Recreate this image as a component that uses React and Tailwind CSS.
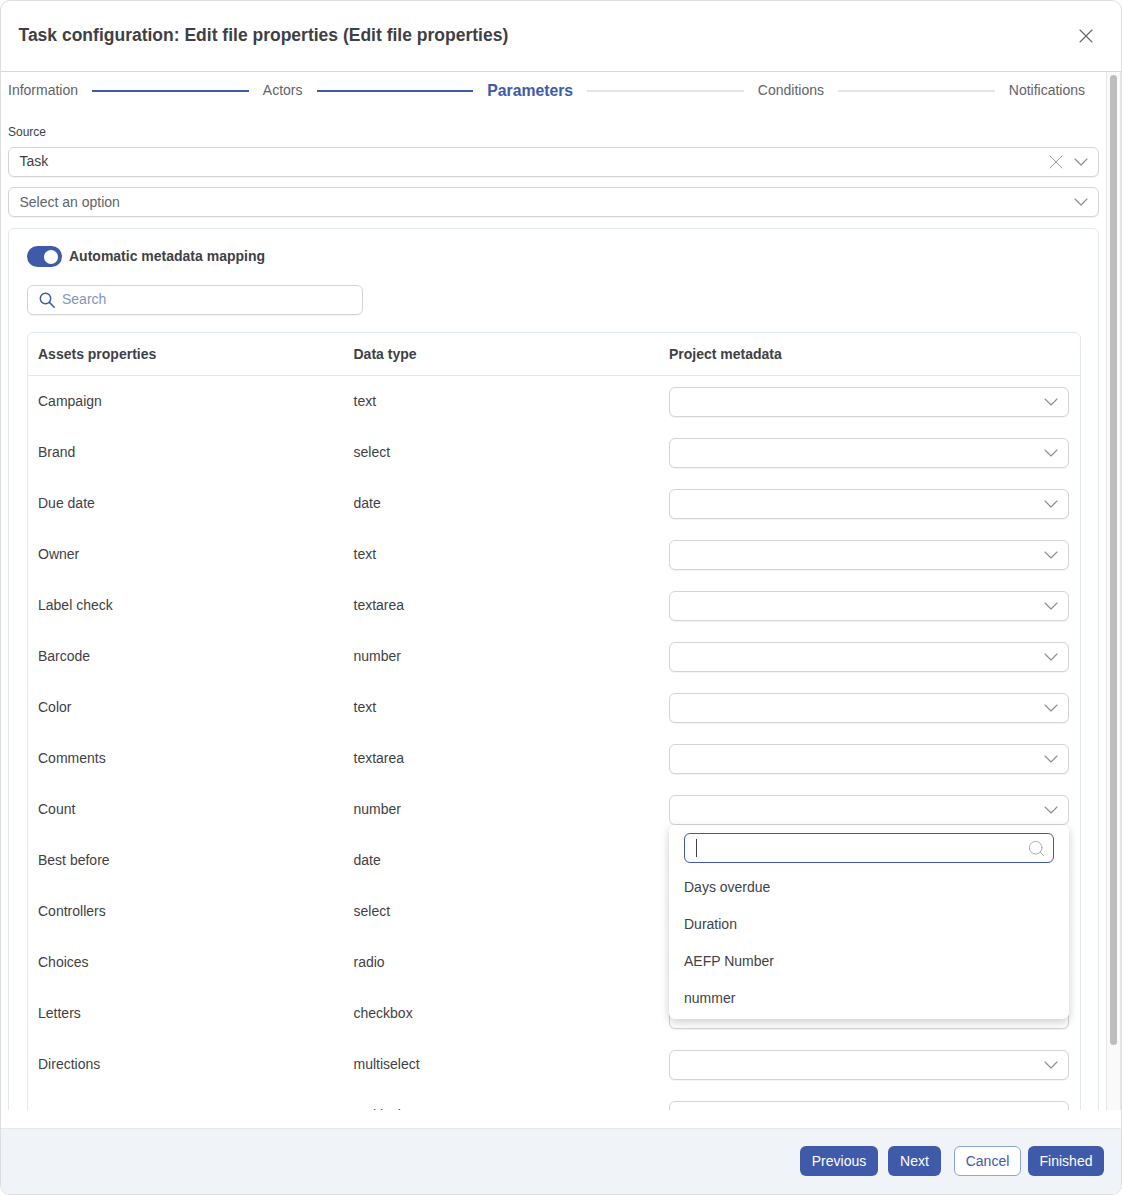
import { Fragment } from 'react';
import { ChevronDown, X, Search } from 'lucide-react';

const steps = [
  { label: 'Information', done: true },
  { label: 'Actors', done: true },
  { label: 'Parameters', active: true },
  { label: 'Conditions' },
  { label: 'Notifications', last: true },
];

const rows = [
  ['Campaign', 'text'],
  ['Brand', 'select'],
  ['Due date', 'date'],
  ['Owner', 'text'],
  ['Label check', 'textarea'],
  ['Barcode', 'number'],
  ['Color', 'text'],
  ['Comments', 'textarea'],
  ['Count', 'number'],
  ['Best before', 'date'],
  ['Controllers', 'select'],
  ['Choices', 'radio'],
  ['Letters', 'checkbox'],
  ['Directions', 'multiselect'],
  ['Currency', 'multiselect'],
];

const options = ['Days overdue', 'Duration', 'AEFP Number', 'nummer'];

const SelectBox = ({ children, clearable }) => (
  <div className="flex h-[30px] w-full items-center rounded-md border border-[#d4d4d8] bg-white pl-[10.5px] pr-[5px] text-sm shadow-[0_1px_1px_rgba(0,0,0,0.05)]">
    <div className="flex-1">{children}</div>
    {clearable && <X className="mr-px h-[24px] w-[24px] text-[#9a9aa2]" strokeWidth={1} />}
    <ChevronDown className="h-[24px] w-[24px] text-[#8b8b94]" strokeWidth={1.1} />
  </div>
);

const App = () => {
  return (
    <div className="flex h-[1195px] w-[1122px] flex-col overflow-hidden rounded-[10px] border border-[#dcdde0] bg-white font-['Liberation_Sans',Arial,sans-serif] text-[#3f3f46]">
      <div className="flex h-[71px] shrink-0 items-center justify-between border-b border-[#d8d8db] pl-[17.5px] pr-[23px]">
        <h1 className="pb-[2px] text-[17.5px] font-bold">Task configuration: Edit file properties (Edit file properties)</h1>
        <X className="h-[24px] w-[24px] text-[#63636b]" strokeWidth={1.1} />
      </div>

      <div className="flex h-[1038px] shrink-0">
        <div className="min-w-0 flex-1 overflow-hidden pl-[7px] pr-[7px]">
          <div className="flex h-[36px] items-center gap-[14px] pr-[14px]">
            {steps.map((step) => (
              <Fragment key={step.label}>
                <span className={step.active ? 'pt-px text-[15.75px] font-bold text-[#3f5aa9]' : 'text-sm text-[#63636b]'}>{step.label}</span>
                {!step.last && <div className={step.done ? 'mt-px h-[2px] flex-1 bg-[#3f5aa9]' : 'mt-px h-[2px] flex-1 bg-[#e4e4e7]'} />}
              </Fragment>
            ))}
          </div>

          <label className="mt-[17px] block text-xs leading-[14px]">Source</label>
          <div className="mt-[8px]">
            <SelectBox clearable><span className="block pb-[2px]">Task</span></SelectBox>
          </div>
          <div className="mt-[10px]">
            <SelectBox><span className="text-[#63636b]">Select an option</span></SelectBox>
          </div>

          <div className="mt-[11px] rounded-t-md border border-[#e2e8f0] pl-[18px] pr-[17px] pt-[17px]">
            <div className="flex items-center gap-[7px]">
              <div className="flex h-[21px] w-[35px] items-center justify-end rounded-full bg-[#3f5aa9] pr-[4px]">
                <div className="h-[14px] w-[14px] rounded-full bg-white" />
              </div>
              <span className="pb-[2px] text-sm leading-[18px] font-bold">Automatic metadata mapping</span>
            </div>

            <div className="mt-[18px] flex h-[30px] w-[336px] items-center gap-[7px] rounded-md border border-[#d4d4d8] pl-[11px] shadow-[0_1px_1px_rgba(0,0,0,0.05)]">
              {/* lucide's glass is too round here, the handle is longer */}
              <svg viewBox="0 0 16 16" fill="none" stroke="currentColor" strokeWidth="1.5" strokeLinecap="round" className="h-[16px] w-[16px] text-[#3f5aa9]">
                <circle cx="6.5" cy="6.5" r="5.2" />
                <path d="M10.4 10.4 15.2 15.2" />
              </svg>
              <span className="pb-[2px] text-sm text-[#8494bb]">Search</span>
            </div>

            <div className="relative mt-[17px] rounded-t-md border border-[#e2e8f0]">
              <div className="grid h-[43px] grid-cols-[315.5px_315.5px_1fr] items-center border-b border-[#e2e8f0] px-[10px] text-sm font-bold">
                <span>Assets properties</span>
                <span>Data type</span>
                <span>Project metadata</span>
              </div>
              <div className="pt-[11px]">
                {rows.map(([name, type]) => (
                  <div key={name} className="grid h-[51px] grid-cols-[315.5px_315.5px_1fr] px-[10px] pr-[11px] text-sm">
                    <span className="pt-[4px]">{name}</span>
                    <span className="pt-[4px]">{type}</span>
                    <SelectBox />
                  </div>
                ))}
              </div>

              <div className="absolute left-[641px] top-[492px] w-[400px] rounded-md bg-white px-[15px] pb-[3px] pt-[8px] shadow-[0_3px_10px_rgba(0,0,0,0.2)]">
                <div className="flex h-[30px] items-center justify-between rounded-md border border-[#3f5aa9] pl-[11px] pr-[7px]">
                  <div className="h-[18px] w-px bg-[#3f3f46]" />
                  <Search className="h-[19px] w-[19px] text-[#9a9aa2]" strokeWidth={1} />
                </div>
                <div className="mt-[5px]">
                  {options.map((option) => (
                    <div key={option} className="flex h-[37px] items-center text-sm">{option}</div>
                  ))}
                </div>
              </div>
            </div>
          </div>
        </div>

        <div className="w-[15px] shrink-0 border-x border-[#e8e8ea] bg-[#fafafa] px-[3px] pt-[3px]">
          <div className="h-[970px] rounded-full bg-[#bdbdbd]" />
        </div>
      </div>

      <div className="h-[18px] shrink-0" />

      <div className="flex flex-1 items-center justify-end border-t border-[#e2e8f0] bg-[#f0f4f9] pb-[2px] pr-[17px] text-sm">
        <button className="mr-[10px] h-[30px] w-[78px] rounded-md bg-[#3f5aa9] text-white">Previous</button>
        <button className="mr-[13px] h-[30px] w-[53px] rounded-md bg-[#3f5aa9] text-white">Next</button>
        <button className="mr-[7px] h-[30px] w-[67px] rounded-md border border-[#8ba3de] bg-white text-[#3f5aa9]">Cancel</button>
        <button className="h-[30px] w-[76px] rounded-md bg-[#3f5aa9] text-white">Finished</button>
      </div>
    </div>
  );
};

export default App;
